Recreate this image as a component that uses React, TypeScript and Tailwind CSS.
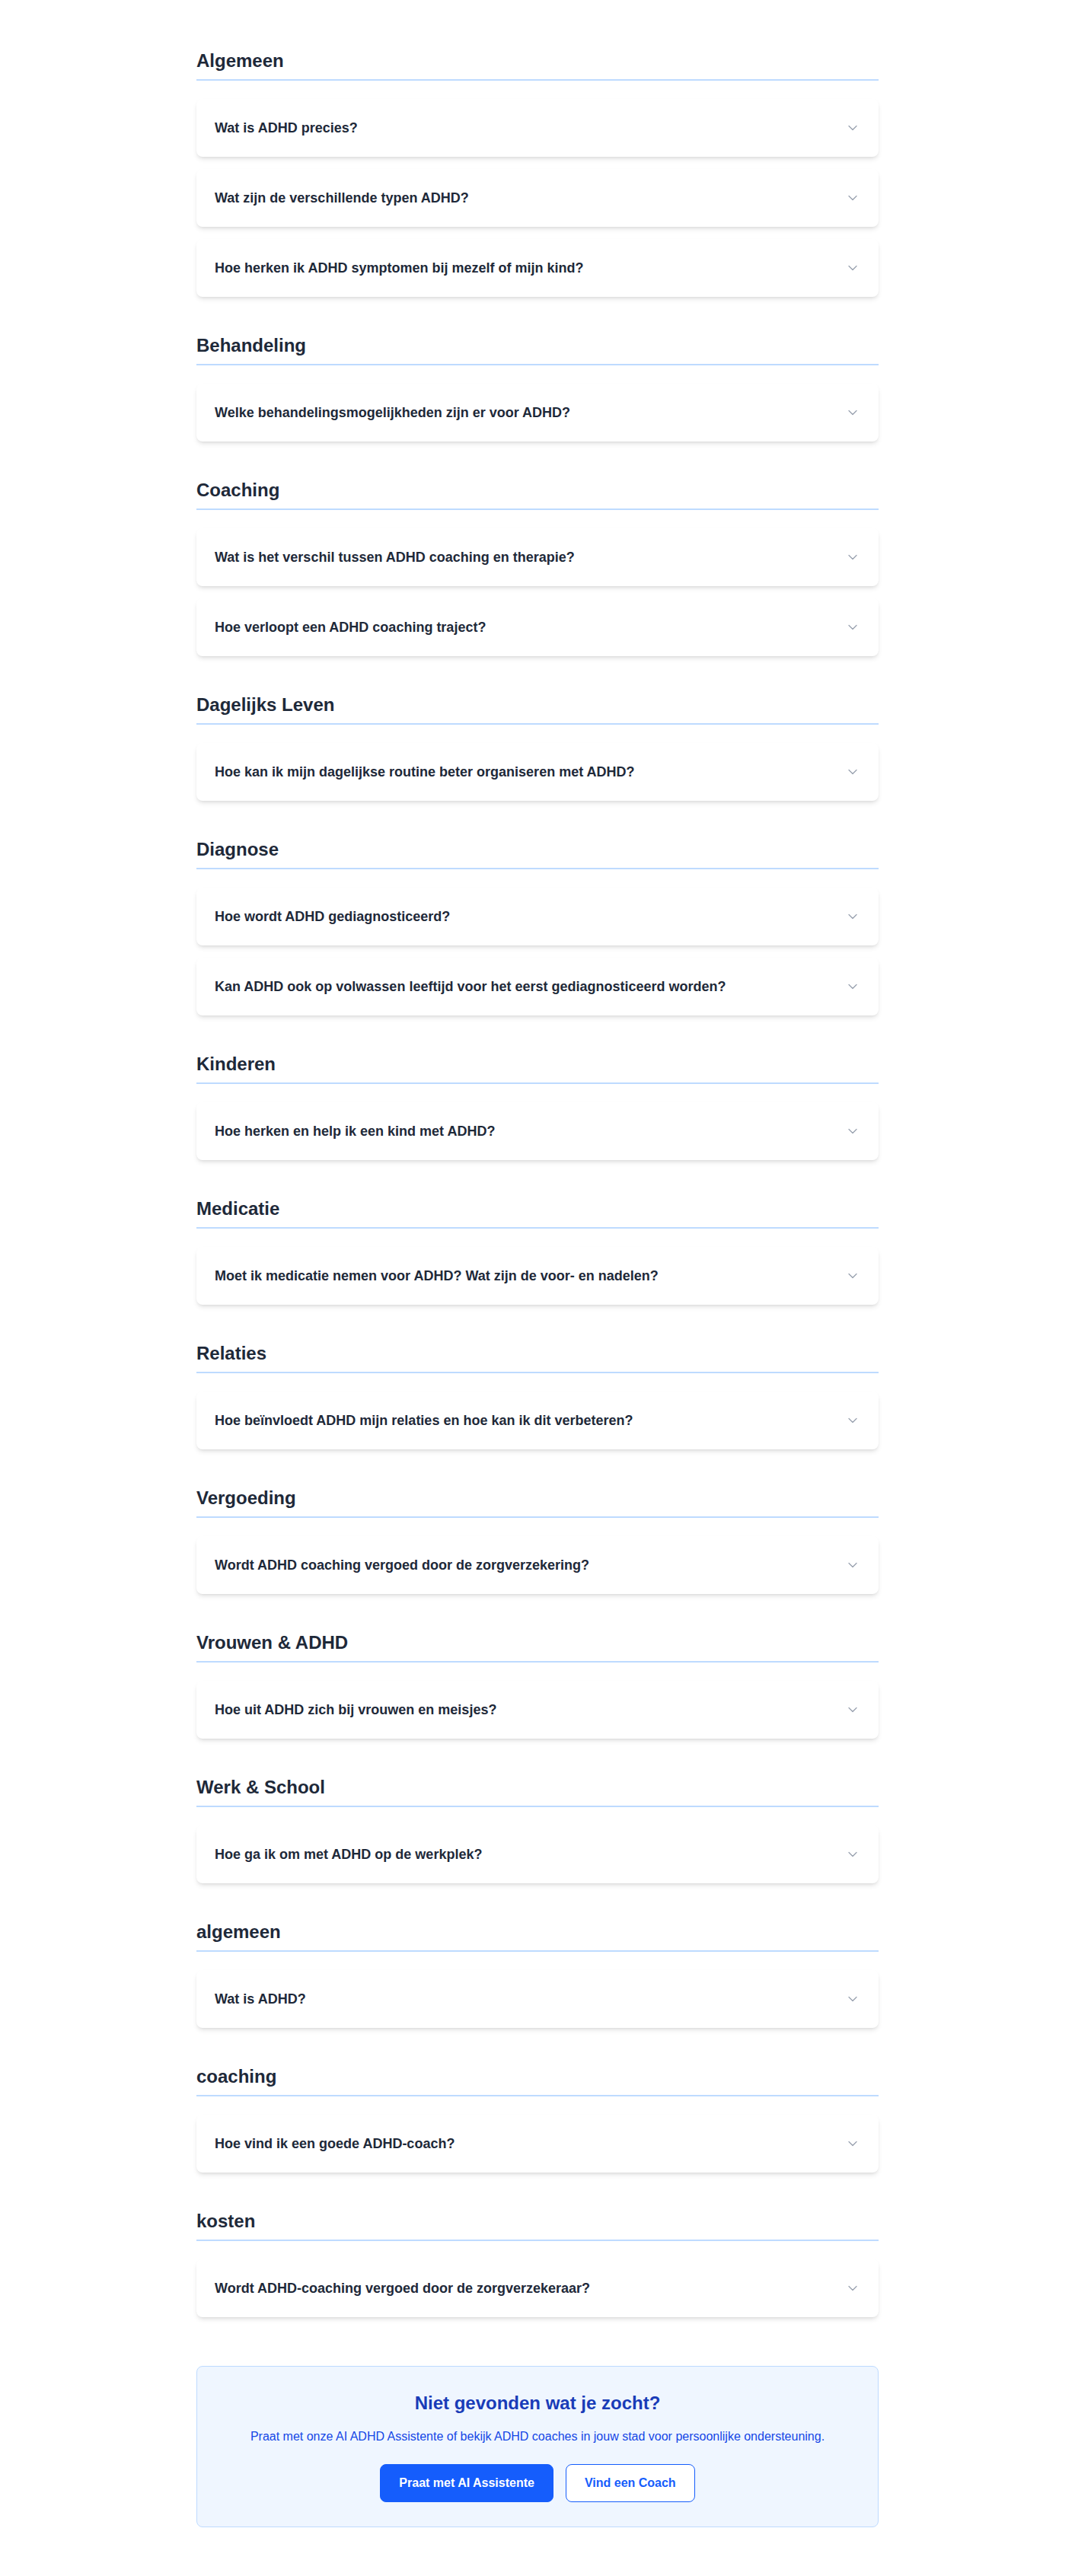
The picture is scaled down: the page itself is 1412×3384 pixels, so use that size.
import React from "react";
import { ChevronDown } from "lucide-react";

const sections = [
  {
    title: "Algemeen",
    questions: [
      "Wat is ADHD precies?",
      "Wat zijn de verschillende typen ADHD?",
      "Hoe herken ik ADHD symptomen bij mezelf of mijn kind?",
    ],
  },
  {
    title: "Behandeling",
    questions: ["Welke behandelingsmogelijkheden zijn er voor ADHD?"],
  },
  {
    title: "Coaching",
    questions: [
      "Wat is het verschil tussen ADHD coaching en therapie?",
      "Hoe verloopt een ADHD coaching traject?",
    ],
  },
  {
    title: "Dagelijks Leven",
    questions: ["Hoe kan ik mijn dagelijkse routine beter organiseren met ADHD?"],
  },
  {
    title: "Diagnose",
    questions: [
      "Hoe wordt ADHD gediagnosticeerd?",
      "Kan ADHD ook op volwassen leeftijd voor het eerst gediagnosticeerd worden?",
    ],
  },
  {
    title: "Kinderen",
    questions: ["Hoe herken en help ik een kind met ADHD?"],
  },
  {
    title: "Medicatie",
    questions: ["Moet ik medicatie nemen voor ADHD? Wat zijn de voor- en nadelen?"],
  },
  {
    title: "Relaties",
    questions: ["Hoe beïnvloedt ADHD mijn relaties en hoe kan ik dit verbeteren?"],
  },
  {
    title: "Vergoeding",
    questions: ["Wordt ADHD coaching vergoed door de zorgverzekering?"],
  },
  {
    title: "Vrouwen & ADHD",
    questions: ["Hoe uit ADHD zich bij vrouwen en meisjes?"],
  },
  {
    title: "Werk & School",
    questions: ["Hoe ga ik om met ADHD op de werkplek?"],
  },
  {
    title: "algemeen",
    questions: ["Wat is ADHD?"],
  },
  {
    title: "coaching",
    questions: ["Hoe vind ik een goede ADHD-coach?"],
  },
  {
    title: "kosten",
    questions: ["Wordt ADHD-coaching vergoed door de zorgverzekeraar?"],
  },
];

const FaqItem = ({ question }: { question: string }) => {
  return (
    <div className="bg-white rounded-lg shadow-md">
      <button className="w-full flex items-center justify-between px-6 py-6 text-left">
        <span className="text-lg font-semibold text-gray-800">{question}</span>
        <ChevronDown className="w-5 h-5 text-gray-400 shrink-0" strokeWidth={1.5} />
      </button>
    </div>
  );
};

export default function App() {
  return (
    <div className="min-h-screen bg-white font-['Liberation_Sans',Arial,sans-serif]">
      <div className="max-w-4xl mx-auto py-16">
        <div className="space-y-12">
          {sections.map((section) => (
            <section key={section.title}>
              <h2 className="text-2xl font-semibold text-gray-800 pb-2 mb-6 border-b-2 border-blue-200">
                {section.title}
              </h2>
              <div className="space-y-4">
                {section.questions.map((q) => (
                  <FaqItem key={q} question={q} />
                ))}
              </div>
            </section>
          ))}
        </div>

        <div className="mt-16 bg-blue-50 border border-blue-200 rounded-lg p-8 text-center">
          <h3 className="text-2xl font-bold text-blue-800 mb-4">Niet gevonden wat je zocht?</h3>
          <p className="text-base text-blue-700 mb-6">
            Praat met onze AI ADHD Assistente of bekijk ADHD coaches in jouw stad voor persoonlijke
            ondersteuning.
          </p>
          <div className="flex justify-center gap-4">
            <button className="px-6 py-3 rounded-lg border border-blue-600 bg-blue-600 text-white font-semibold">
              Praat met AI Assistente
            </button>
            <button className="px-6 py-3 rounded-lg border border-blue-600 bg-white text-blue-600 font-semibold">
              Vind een Coach
            </button>
          </div>
        </div>
      </div>
    </div>
  );
}
